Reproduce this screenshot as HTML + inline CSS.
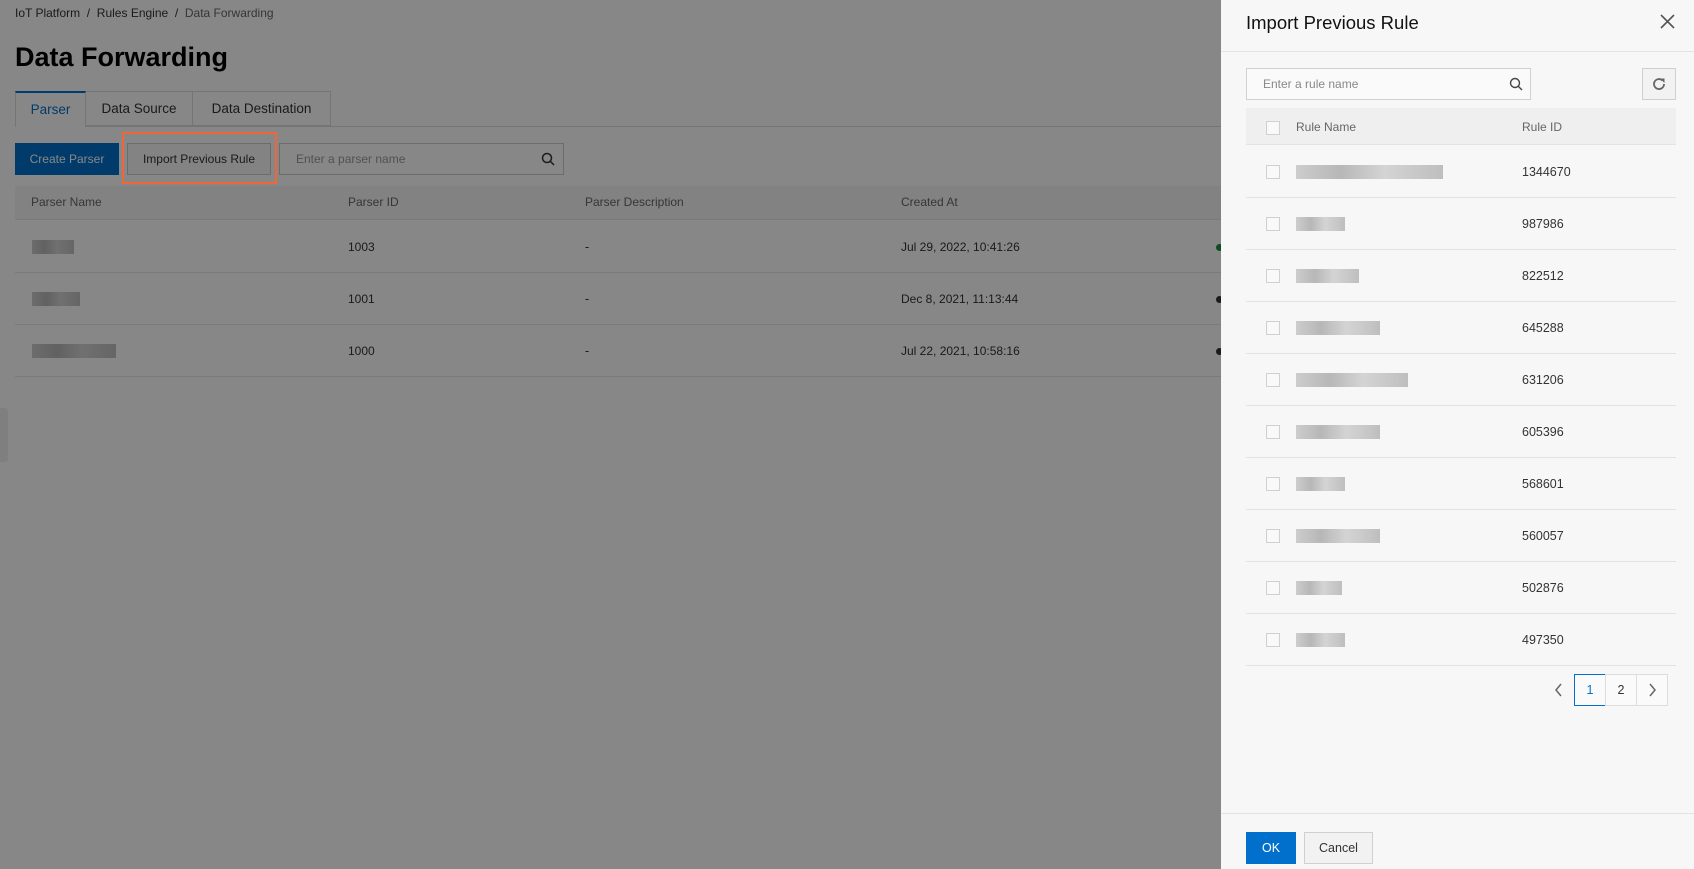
<!DOCTYPE html>
<html><head><meta charset="utf-8"><style>
*{box-sizing:border-box;margin:0;padding:0}
body{width:1694px;height:869px;position:relative;overflow:hidden;background:#fff;font-family:"Liberation Sans",sans-serif;color:#333}
.a{position:absolute}
.ov{position:absolute;left:0;top:0;width:1694px;height:869px;background:rgba(0,0,0,0.47)}
.t{font-size:12.5px;white-space:nowrap}
.blur{position:absolute;height:14px;background:linear-gradient(90deg,#c8c8c8,#b0b0b0 30%,#d0d0d0 60%,#b8b8b8);opacity:.9}
.cb{position:absolute;width:14px;height:14px;border:1px solid #d0d0d0;background:#f9f9f9}
.rl{position:absolute;left:1246px;width:430px;height:1px;background:#e3e3e3}
</style></head><body>
<div class="a t" style="left:15px;top:6px;color:#333;font-size:12px">IoT Platform &nbsp;/&nbsp; Rules Engine &nbsp;/&nbsp; <span style="color:#666">Data Forwarding</span></div>
<div class="a" style="left:15px;top:42px;font-size:27px;font-weight:bold;color:#000">Data Forwarding</div>
<div class="a" style="left:15px;top:126px;width:1300px;height:1px;background:#ddd"></div>
<div class="a" style="left:15px;top:91px;width:71px;height:36px;border:1px solid #ddd;border-top:2px solid #0070cc;border-bottom:none;background:#fff;color:#0070cc;font-size:13.5px;text-align:center;line-height:34px">Parser</div>
<div class="a" style="left:86px;top:91px;width:107px;height:35px;border:1px solid #ddd;border-left:none;background:#fff;font-size:13.5px;text-align:center;line-height:34px">Data Source</div>
<div class="a" style="left:193px;top:91px;width:138px;height:35px;border:1px solid #ddd;border-left:none;background:#fff;font-size:13.5px;text-align:center;line-height:34px">Data Destination</div>
<div class="a t" style="left:15px;top:143px;width:104px;height:32px;background:#0070cc;color:#fff;text-align:center;line-height:32px;font-size:12px">Create Parser</div>
<div class="a t" style="left:127px;top:143px;width:144px;height:32px;border:1px solid #ccc;background:#f7f7f7;text-align:center;line-height:30px;font-size:12px">Import Previous Rule</div>
<div class="a t" style="left:279px;top:143px;width:285px;height:32px;border:1px solid #ccc;background:#fff;color:#999;padding-left:16px;line-height:30px;font-size:12px">Enter a parser name</div>
<svg class="a" style="left:541px;top:152px" width="14" height="14" viewBox="0 0 14 14"><circle cx="6" cy="6" r="4.5" fill="none" stroke="#333" stroke-width="1.5"/><path d="M9.5 9.5L13 13" stroke="#333" stroke-width="1.5"/></svg>
<div class="a" style="left:15px;top:186px;width:1300px;height:34px;background:#f5f5f5;border-bottom:1px solid #e6e6e6"></div>
<div class="a t" style="left:31px;top:195px;color:#666;font-size:12px">Parser Name</div>
<div class="a t" style="left:348px;top:195px;color:#666;font-size:12px">Parser ID</div>
<div class="a t" style="left:585px;top:195px;color:#666;font-size:12px">Parser Description</div>
<div class="a t" style="left:901px;top:195px;color:#666;font-size:12px">Created At</div>
<div class="a" style="left:15px;top:272px;width:1300px;height:1px;background:#e6e6e6"></div>
<div class="a" style="left:15px;top:324px;width:1300px;height:1px;background:#e6e6e6"></div>
<div class="a" style="left:15px;top:376px;width:1300px;height:1px;background:#e6e6e6"></div>
<div class="blur" style="left:32px;top:240px;width:42px"></div>
<div class="blur" style="left:32px;top:292px;width:48px"></div>
<div class="blur" style="left:32px;top:344px;width:84px"></div>
<div class="a t" style="left:348px;top:240px;font-size:12px">1003</div><div class="a t" style="left:585px;top:240px">-</div><div class="a t" style="left:901px;top:240px;font-size:12px">Jul 29, 2022, 10:41:26</div>
<div class="a t" style="left:348px;top:292px;font-size:12px">1001</div><div class="a t" style="left:585px;top:292px">-</div><div class="a t" style="left:901px;top:292px;font-size:12px">Dec 8, 2021, 11:13:44</div>
<div class="a t" style="left:348px;top:344px;font-size:12px">1000</div><div class="a t" style="left:585px;top:344px">-</div><div class="a t" style="left:901px;top:344px;font-size:12px">Jul 22, 2021, 10:58:16</div>
<div class="a" style="left:1216px;top:244px;width:7px;height:7px;border-radius:50%;background:#1e8e3e"></div>
<div class="a" style="left:1216px;top:296px;width:7px;height:7px;border-radius:50%;background:#333"></div>
<div class="a" style="left:1216px;top:348px;width:7px;height:7px;border-radius:50%;background:#333"></div>
<div class="a" style="left:0;top:408px;width:8px;height:54px;background:#f0f0f0;border-radius:0 3px 3px 0"></div>
<div class="ov"></div>
<div class="a" style="left:122px;top:132px;width:155px;height:52px;border:2px solid #f0653a"></div>
<div class="a" style="left:1221px;top:0;width:473px;height:869px;background:#f7f7f7"></div>
<div class="a" style="left:1246px;top:12px;font-size:18.5px;color:#111">Import Previous Rule</div>
<svg class="a" style="left:1660px;top:14px" width="15" height="15" viewBox="0 0 15 15"><path d="M1 1L14 14M14 1L1 14" stroke="#555" stroke-width="1.6"/></svg>
<div class="a" style="left:1221px;top:51px;width:473px;height:1px;background:#e3e3e3"></div>
<div class="a t" style="left:1246px;top:68px;width:285px;height:32px;border:1px solid #d0d0d0;background:#fafafa;color:#888;padding-left:16px;line-height:30px;font-size:12px">Enter a rule name</div>
<svg class="a" style="left:1509px;top:77px" width="14" height="14" viewBox="0 0 14 14"><circle cx="6" cy="6" r="4.5" fill="none" stroke="#444" stroke-width="1.4"/><path d="M9.5 9.5L13 13" stroke="#444" stroke-width="1.4"/></svg>
<div class="a" style="left:1642px;top:68px;width:34px;height:32px;border:1px solid #d0d0d0;background:#f2f2f2"></div>
<svg class="a" style="left:1651px;top:76px" width="16" height="16" viewBox="0 0 16 16"><path d="M13 8A5 5 0 1 1 11.5 4.5" fill="none" stroke="#666" stroke-width="1.8"/><path d="M9 2.5L13.5 2.5L13.5 7Z" fill="#666"/></svg>
<div class="a" style="left:1246px;top:108px;width:430px;height:37px;background:#efefef;border-bottom:1px solid #e3e3e3"></div>
<div class="cb" style="left:1266px;top:121px"></div>
<div class="a t" style="left:1296px;top:120px;color:#666;font-size:12px">Rule Name</div>
<div class="a t" style="left:1522px;top:120px;color:#666;font-size:12px">Rule ID</div>
<div class="cb" style="left:1266px;top:165px"></div><div class="blur" style="left:1296px;top:165px;width:147px"></div><div class="a t" style="left:1522px;top:165px">1344670</div><div class="rl" style="top:197px"></div>
<div class="cb" style="left:1266px;top:217px"></div><div class="blur" style="left:1296px;top:217px;width:49px"></div><div class="a t" style="left:1522px;top:217px">987986</div><div class="rl" style="top:249px"></div>
<div class="cb" style="left:1266px;top:269px"></div><div class="blur" style="left:1296px;top:269px;width:63px"></div><div class="a t" style="left:1522px;top:269px">822512</div><div class="rl" style="top:301px"></div>
<div class="cb" style="left:1266px;top:321px"></div><div class="blur" style="left:1296px;top:321px;width:84px"></div><div class="a t" style="left:1522px;top:321px">645288</div><div class="rl" style="top:353px"></div>
<div class="cb" style="left:1266px;top:373px"></div><div class="blur" style="left:1296px;top:373px;width:112px"></div><div class="a t" style="left:1522px;top:373px">631206</div><div class="rl" style="top:405px"></div>
<div class="cb" style="left:1266px;top:425px"></div><div class="blur" style="left:1296px;top:425px;width:84px"></div><div class="a t" style="left:1522px;top:425px">605396</div><div class="rl" style="top:457px"></div>
<div class="cb" style="left:1266px;top:477px"></div><div class="blur" style="left:1296px;top:477px;width:49px"></div><div class="a t" style="left:1522px;top:477px">568601</div><div class="rl" style="top:509px"></div>
<div class="cb" style="left:1266px;top:529px"></div><div class="blur" style="left:1296px;top:529px;width:84px"></div><div class="a t" style="left:1522px;top:529px">560057</div><div class="rl" style="top:561px"></div>
<div class="cb" style="left:1266px;top:581px"></div><div class="blur" style="left:1296px;top:581px;width:46px"></div><div class="a t" style="left:1522px;top:581px">502876</div><div class="rl" style="top:613px"></div>
<div class="cb" style="left:1266px;top:633px"></div><div class="blur" style="left:1296px;top:633px;width:49px"></div><div class="a t" style="left:1522px;top:633px">497350</div><div class="rl" style="top:665px"></div>
<svg class="a" style="left:1554px;top:683px" width="10" height="14" viewBox="0 0 10 14"><path d="M7 1L2 7L7 13" fill="none" stroke="#666" stroke-width="1.5"/></svg>
<div class="a t" style="left:1574px;top:674px;width:32px;height:32px;border:1px solid #0070cc;text-align:center;line-height:30px;color:#0070cc;background:#fafafa">1</div>
<div class="a t" style="left:1605px;top:674px;width:32px;height:32px;border:1px solid #ddd;text-align:center;line-height:30px;background:#fafafa">2</div>
<div class="a" style="left:1636px;top:674px;width:32px;height:32px;border:1px solid #ddd;background:#fafafa"></div>
<svg class="a" style="left:1647px;top:683px" width="10" height="14" viewBox="0 0 10 14"><path d="M3 1L8 7L3 13" fill="none" stroke="#666" stroke-width="1.5"/></svg>
<div class="a" style="left:1221px;top:813px;width:473px;height:1px;background:#e3e3e3"></div>
<div class="a t" style="left:1246px;top:832px;width:50px;height:32px;background:#0070cc;color:#fff;text-align:center;line-height:32px">OK</div>
<div class="a t" style="left:1304px;top:832px;width:69px;height:32px;border:1px solid #d0d0d0;background:#f2f2f2;text-align:center;line-height:30px">Cancel</div>
</body></html>
